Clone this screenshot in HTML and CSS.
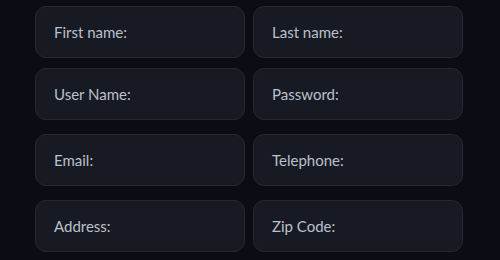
FILE: index.html
```html
<!DOCTYPE html>
<html lang="en">
  <head>
    <meta charset="UTF-8" />
    <meta name="viewport" content="width=device-width, initial-scale=1.0" />
    <title>Register</title>
    <link rel="stylesheet" href="styles.css">
  </head>
  <body>
    <div class="wrapper">
      <div class="row row-tight">
        <div class="field">First name:</div>
        <div class="field">Last name:</div>
      </div>
      <div class="row">
        <div class="field">User Name:</div>
        <div class="field">Password:</div>
      </div>
      <div class="row">
        <div class="field">Email:</div>
        <div class="field">Telephone:</div>
      </div>
      <div class="row">
        <div class="field">Address:</div>
        <div class="field">Zip Code:</div>
      </div>
    </div>
  </body>
</html>
```

FILE: styles.css
```css
body {
  margin: 0;
  background-color: #0b0d14;
  font-family: Lato, "Noto Sans", sans-serif;
}
.wrapper {
  display: flex;
  flex-direction: column;
  gap: 14px;
  padding: 6px 0 0 35px;
  height: 260px;
  box-sizing: border-box;
}
.row {
  display: flex;
  gap: 8px;
}
.row-tight {
  margin-bottom: -4px;
}
.field {
  width: 210px;
  height: 52px;
  box-sizing: border-box;
  display: flex;
  align-items: center;
  padding-left: 18px;
  background-color: #171a22;
  border: 1px solid #252832;
  border-radius: 11px;
  color: #bcc0cb;
  font-size: 15px;
}
```
